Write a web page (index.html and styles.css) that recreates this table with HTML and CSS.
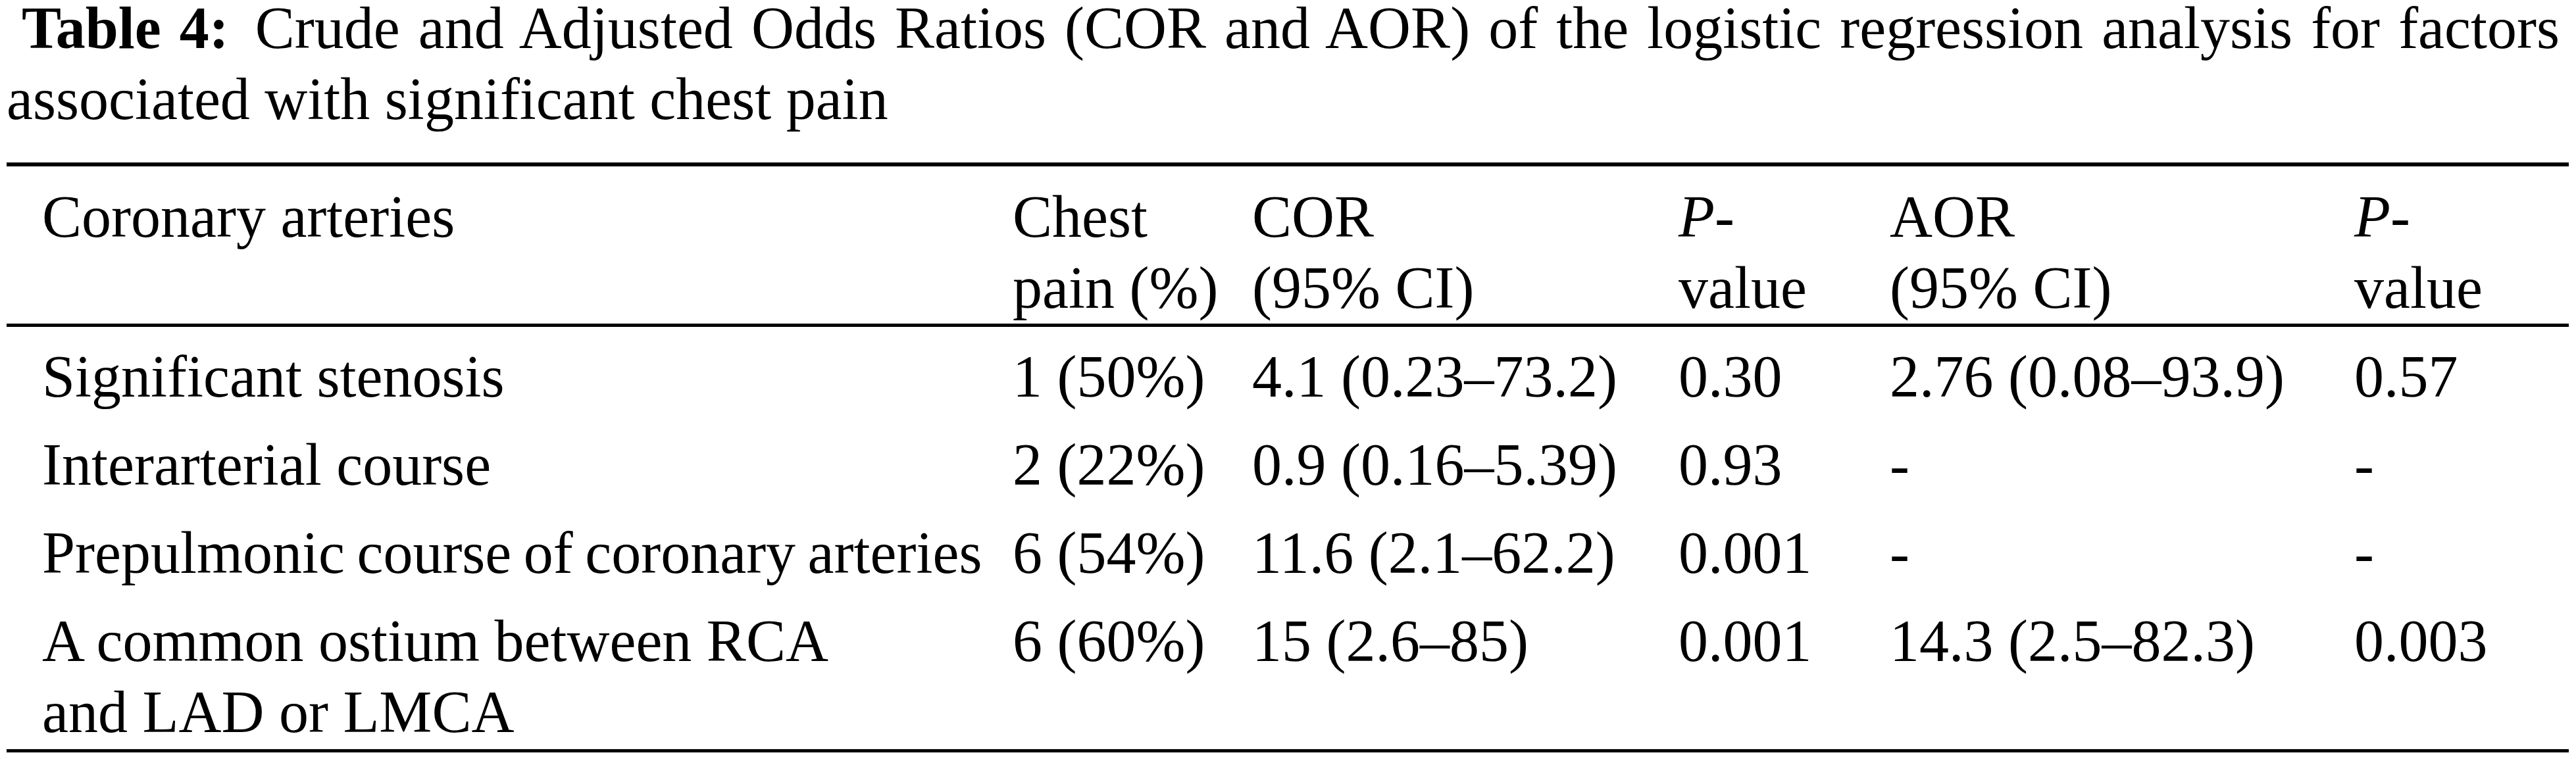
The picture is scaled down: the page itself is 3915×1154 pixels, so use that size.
FILE: index.html
```html
<!DOCTYPE html>
<html lang="en">
<head>
<meta charset="utf-8">
<title>Table 4</title>
<link rel="stylesheet" href="styles.css">
</head>
<body>
<div class="page">
  <div class="title">
    <p class="title-line first"><b class="label">Table 4:</b> Crude and Adjusted Odds Ratios (COR and AOR) of the logistic regression analysis for factors</p>
    <p class="title-line">associated with significant chest pain</p>
  </div>
  <table class="data">
    <colgroup>
      <col class="c1"><col class="c2"><col class="c3"><col class="c4"><col class="c5"><col class="c6">
    </colgroup>
    <thead>
      <tr>
        <th>Coronary arteries</th>
        <th>Chest<br>pain (%)</th>
        <th>COR<br>(95% CI)</th>
        <th><i>P</i>-<br>value</th>
        <th>AOR<br>(95% CI)</th>
        <th><i>P</i>-<br>value</th>
      </tr>
    </thead>
    <tbody>
      <tr>
        <td>Significant stenosis</td>
        <td>1 (50%)</td>
        <td>4.1 (0.23–73.2)</td>
        <td>0.30</td>
        <td>2.76 (0.08–93.9)</td>
        <td>0.57</td>
      </tr>
      <tr>
        <td>Interarterial course</td>
        <td>2 (22%)</td>
        <td>0.9 (0.16–5.39)</td>
        <td>0.93</td>
        <td>-</td>
        <td>-</td>
      </tr>
      <tr>
        <td class="tight">Prepulmonic course of coronary arteries</td>
        <td>6 (54%)</td>
        <td>11.6 (2.1–62.2)</td>
        <td>0.001</td>
        <td>-</td>
        <td>-</td>
      </tr>
      <tr class="last">
        <td>A common ostium between RCA<br>and LAD or LMCA</td>
        <td>6 (60%)</td>
        <td>15 (2.6–85)</td>
        <td>0.001</td>
        <td>14.3 (2.5–82.3)</td>
        <td>0.003</td>
      </tr>
    </tbody>
  </table>
</div>
</body>
</html>
```

FILE: styles.css
```css
html, body {
  margin: 0;
  padding: 0;
  background: #ffffff;
}

body {
  font-family: "Liberation Serif", "Times New Roman", serif;
  font-size: 90px;
  line-height: 108px;
  color: #000000;
}

.page {
  padding-left: 10px;
  width: 3894px;
}

.title {
  margin-top: -11px;
  width: 3880px;
}

.title-line {
  margin: 0;
  white-space: nowrap;
}

.title-line.first {
  text-align: justify;
  text-align-last: justify;
  padding-left: 23px;
}

.title .label {
  font-weight: bold;
  margin-right: 12px;
}

.data {
  margin-top: 42px;
  width: 3894px;
  table-layout: fixed;
  border-collapse: separate;
  border-spacing: 0;
}

.c1 { width: 1529px; }
.c2 { width: 364px; }
.c3 { width: 648px; }
.c4 { width: 321px; }
.c5 { width: 706px; }
.c6 { width: 326px; }

.data th,
.data td {
  text-align: left;
  vertical-align: top;
  font-weight: normal;
  white-space: nowrap;
  padding: 0;
}

.data th {
  border-top: 6px solid #000000;
  border-bottom: 5px solid #000000;
  padding-top: 23px;
  padding-bottom: 0;
}

.data td {
  padding-top: 22px;
  padding-bottom: 4px;
}

.data th:first-child,
.data td:first-child {
  padding-left: 54px;
}

.data td.tight {
  word-spacing: -4px;
}

.data tr.last td {
  padding-bottom: 2px;
  border-bottom: 5px solid #000000;
}
```
